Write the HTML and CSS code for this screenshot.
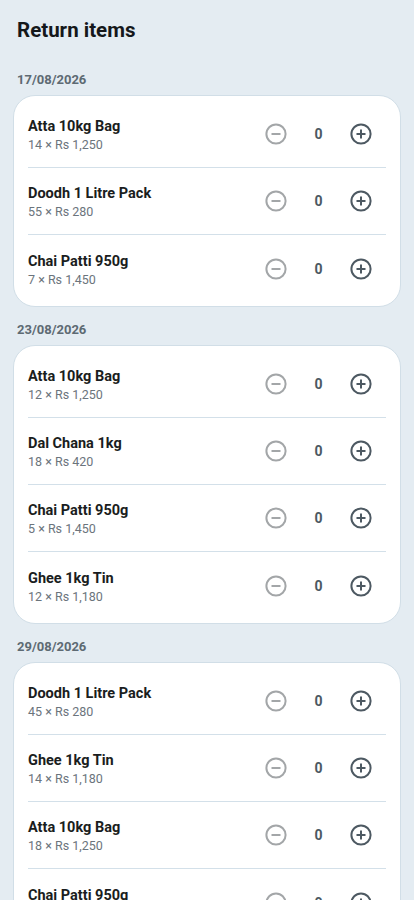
FILE: index.html
```html
<!DOCTYPE html>
<html lang="en">
<head>
<meta charset="utf-8">
<meta name="viewport" content="width=device-width, initial-scale=1">
<title>Return items</title>
<link rel="stylesheet" href="styles.css">
</head>
<body>
<div class="page">
  <h1 class="page-title">Return items</h1>

  <section class="group">
    <div class="group-date">17/08/2026</div>
    <div class="card">
      <div class="row"><div class="info"><div class="name">Atta 10kg Bag</div><div class="meta">14 × Rs 1,250</div></div><div class="ctrl"><button class="btn minus"><svg viewBox="0 0 24 24"><circle cx="12" cy="12" r="9.6"/><path d="M7.5 12h9"/></svg></button><span class="count">0</span><button class="btn plus"><svg viewBox="0 0 24 24"><circle cx="12" cy="12" r="9.6"/><path d="M7.5 12h9M12 7.5v9"/></svg></button></div></div>
      <div class="row"><div class="info"><div class="name">Doodh 1 Litre Pack</div><div class="meta">55 × Rs 280</div></div><div class="ctrl"><button class="btn minus"><svg viewBox="0 0 24 24"><circle cx="12" cy="12" r="9.6"/><path d="M7.5 12h9"/></svg></button><span class="count">0</span><button class="btn plus"><svg viewBox="0 0 24 24"><circle cx="12" cy="12" r="9.6"/><path d="M7.5 12h9M12 7.5v9"/></svg></button></div></div>
      <div class="row"><div class="info"><div class="name">Chai Patti 950g</div><div class="meta">7 × Rs 1,450</div></div><div class="ctrl"><button class="btn minus"><svg viewBox="0 0 24 24"><circle cx="12" cy="12" r="9.6"/><path d="M7.5 12h9"/></svg></button><span class="count">0</span><button class="btn plus"><svg viewBox="0 0 24 24"><circle cx="12" cy="12" r="9.6"/><path d="M7.5 12h9M12 7.5v9"/></svg></button></div></div>
    </div>
  </section>

  <section class="group">
    <div class="group-date">23/08/2026</div>
    <div class="card">
      <div class="row"><div class="info"><div class="name">Atta 10kg Bag</div><div class="meta">12 × Rs 1,250</div></div><div class="ctrl"><button class="btn minus"><svg viewBox="0 0 24 24"><circle cx="12" cy="12" r="9.6"/><path d="M7.5 12h9"/></svg></button><span class="count">0</span><button class="btn plus"><svg viewBox="0 0 24 24"><circle cx="12" cy="12" r="9.6"/><path d="M7.5 12h9M12 7.5v9"/></svg></button></div></div>
      <div class="row"><div class="info"><div class="name">Dal Chana 1kg</div><div class="meta">18 × Rs 420</div></div><div class="ctrl"><button class="btn minus"><svg viewBox="0 0 24 24"><circle cx="12" cy="12" r="9.6"/><path d="M7.5 12h9"/></svg></button><span class="count">0</span><button class="btn plus"><svg viewBox="0 0 24 24"><circle cx="12" cy="12" r="9.6"/><path d="M7.5 12h9M12 7.5v9"/></svg></button></div></div>
      <div class="row"><div class="info"><div class="name">Chai Patti 950g</div><div class="meta">5 × Rs 1,450</div></div><div class="ctrl"><button class="btn minus"><svg viewBox="0 0 24 24"><circle cx="12" cy="12" r="9.6"/><path d="M7.5 12h9"/></svg></button><span class="count">0</span><button class="btn plus"><svg viewBox="0 0 24 24"><circle cx="12" cy="12" r="9.6"/><path d="M7.5 12h9M12 7.5v9"/></svg></button></div></div>
      <div class="row"><div class="info"><div class="name">Ghee 1kg Tin</div><div class="meta">12 × Rs 1,180</div></div><div class="ctrl"><button class="btn minus"><svg viewBox="0 0 24 24"><circle cx="12" cy="12" r="9.6"/><path d="M7.5 12h9"/></svg></button><span class="count">0</span><button class="btn plus"><svg viewBox="0 0 24 24"><circle cx="12" cy="12" r="9.6"/><path d="M7.5 12h9M12 7.5v9"/></svg></button></div></div>
    </div>
  </section>

  <section class="group">
    <div class="group-date">29/08/2026</div>
    <div class="card">
      <div class="row"><div class="info"><div class="name">Doodh 1 Litre Pack</div><div class="meta">45 × Rs 280</div></div><div class="ctrl"><button class="btn minus"><svg viewBox="0 0 24 24"><circle cx="12" cy="12" r="9.6"/><path d="M7.5 12h9"/></svg></button><span class="count">0</span><button class="btn plus"><svg viewBox="0 0 24 24"><circle cx="12" cy="12" r="9.6"/><path d="M7.5 12h9M12 7.5v9"/></svg></button></div></div>
      <div class="row"><div class="info"><div class="name">Ghee 1kg Tin</div><div class="meta">14 × Rs 1,180</div></div><div class="ctrl"><button class="btn minus"><svg viewBox="0 0 24 24"><circle cx="12" cy="12" r="9.6"/><path d="M7.5 12h9"/></svg></button><span class="count">0</span><button class="btn plus"><svg viewBox="0 0 24 24"><circle cx="12" cy="12" r="9.6"/><path d="M7.5 12h9M12 7.5v9"/></svg></button></div></div>
      <div class="row"><div class="info"><div class="name">Atta 10kg Bag</div><div class="meta">18 × Rs 1,250</div></div><div class="ctrl"><button class="btn minus"><svg viewBox="0 0 24 24"><circle cx="12" cy="12" r="9.6"/><path d="M7.5 12h9"/></svg></button><span class="count">0</span><button class="btn plus"><svg viewBox="0 0 24 24"><circle cx="12" cy="12" r="9.6"/><path d="M7.5 12h9M12 7.5v9"/></svg></button></div></div>
      <div class="row"><div class="info"><div class="name">Chai Patti 950g</div><div class="meta">9 × Rs 1,450</div></div><div class="ctrl"><button class="btn minus"><svg viewBox="0 0 24 24"><circle cx="12" cy="12" r="9.6"/><path d="M7.5 12h9"/></svg></button><span class="count">0</span><button class="btn plus"><svg viewBox="0 0 24 24"><circle cx="12" cy="12" r="9.6"/><path d="M7.5 12h9M12 7.5v9"/></svg></button></div></div>
    </div>
  </section>
</div>
</body>
</html>
```

FILE: styles.css
```css
* { box-sizing: border-box; }
html, body { margin: 0; padding: 0; }
body {
  background: #e4ecf2;
  font-family: Roboto, "Noto Sans", "Liberation Sans", sans-serif;
  color: #1b1e22;
}
.page {
  padding: 16px 13px 40px;
}
.page-title {
  margin: 0 0 28px 4px;
  font-size: 20.5px;
  line-height: 28px;
  font-weight: 700;
  color: #15181b;
}
.group { margin-bottom: 15px; }
.group-date {
  margin: 0 0 7px 4px;
  font-size: 13px;
  line-height: 16px;
  font-weight: 700;
  color: #5d6a73;
}
.card {
  background: #fff;
  border: 1px solid #d1dee7;
  border-radius: 22px;
  padding: 5px 0 4px;
}
.row {
  height: 67px;
  margin: 0 14px;
  display: flex;
  align-items: center;
  border-bottom: 1px solid #d3e0e9;
}
.row:last-child { border-bottom: none; }
.info { flex: 1; min-width: 0; padding-top: 3px; }
.name {
  font-size: 14.5px;
  line-height: 19px;
  font-weight: 700;
  color: #1a1d20;
}
.meta {
  font-size: 12.5px;
  line-height: 18px;
  color: #6b747c;
}
.ctrl {
  display: flex;
  align-items: center;
  margin-right: 5px;
}
.btn {
  width: 40px;
  height: 40px;
  padding: 0;
  border: 0;
  background: none;
  display: flex;
  align-items: center;
  justify-content: center;
}
.btn svg {
  width: 24px;
  height: 24px;
  fill: none;
  stroke-width: 2;
}
.minus svg { stroke: #a3a6a8; }
.plus svg { stroke: #4d5962; }
.count {
  width: 45px;
  text-align: center;
  font-size: 14px;
  font-weight: 700;
  color: #4c5962;
}
```
